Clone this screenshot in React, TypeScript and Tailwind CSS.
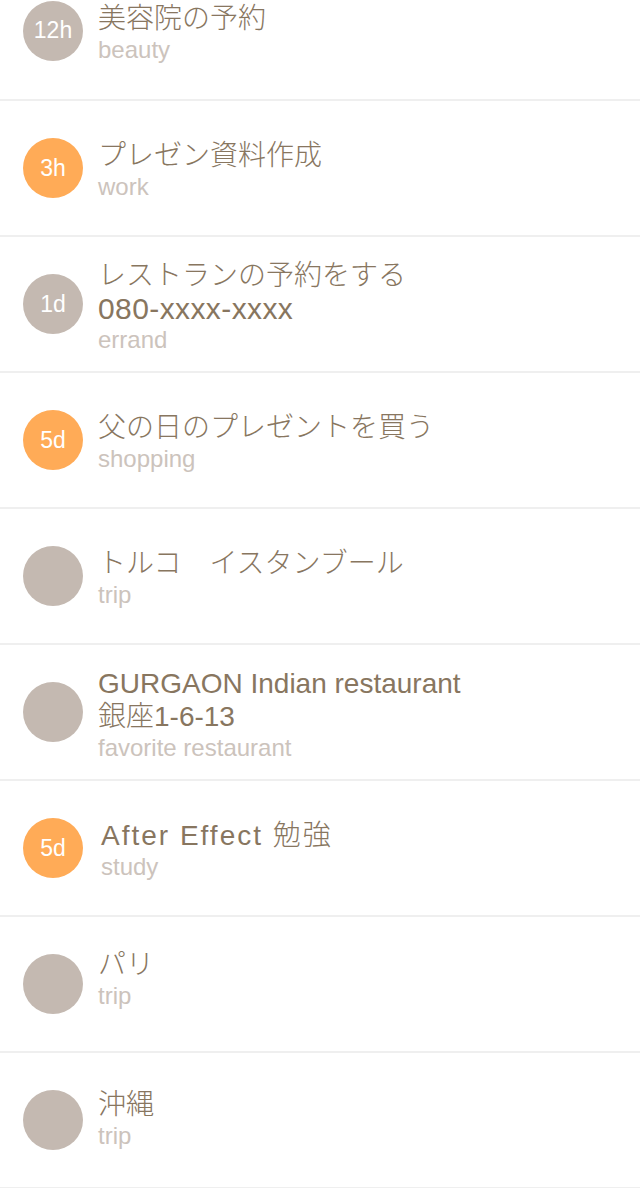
import React from "react";

type Item = {
  badge: string;
  orange: boolean;
  lines: string[];
  sub: string;
  spaced?: boolean;
  shift?: string;
};

const items: Item[] = [
  { badge: "12h", orange: false, lines: ["美容院の予約"], sub: "beauty" },
  { badge: "3h", orange: true, lines: ["プレゼン資料作成"], sub: "work" },
  { badge: "1d", orange: false, lines: ["レストランの予約をする", "080-xxxx-xxxx"], sub: "errand" },
  { badge: "5d", orange: true, lines: ["父の日のプレゼントを買う"], sub: "shopping" },
  { badge: "", orange: false, lines: ["トルコ　イスタンブール"], sub: "trip" },
  { badge: "", orange: false, lines: ["GURGAON Indian restaurant", "銀座1-6-13"], sub: "favorite restaurant" },
  { badge: "5d", orange: true, lines: ["After Effect 勉強"], sub: "study", spaced: true },
  { badge: "", orange: false, lines: ["パリ"], sub: "trip", shift: "-translate-y-[7px]" },
  { badge: "", orange: false, lines: ["沖縄"], sub: "trip", shift: "-translate-y-[3px]" },
];

const font = {
  fontFamily: '"Liberation Sans", "Noto Sans CJK JP", sans-serif',
};

export default function App() {
  return (
    <div className="w-[640px] h-[1188px] overflow-hidden bg-white" style={font}>
      <div className="-mt-[38px]">
        {items.map((it, i) => (
          <div
            key={i}
            className={`flex items-center pl-[23px] gap-[15px] border-b-2 border-[#efefef] ${
              i === 0 ? "h-[139px]" : "h-[136px]"
            }`}
          >
            <div
              className={`w-[60px] h-[60px] rounded-full flex items-center justify-center shrink-0 ${
                it.orange ? "bg-[#ffab57]" : "bg-[#c4b9b1]"
              }`}
            >
              <span className="text-white text-[23px] leading-none font-light">{it.badge}</span>
            </div>
            <div
              className={`flex flex-col pt-[5px] ${it.spaced ? "ml-[3px]" : ""} ${it.shift ?? ""}`}
            >
              {it.lines.map((l, j) => (
                <div
                  key={j}
                  className={`leading-[33px] text-[#88765f] font-light whitespace-nowrap ${
                    it.spaced ? "tracking-[2px]" : ""
                  } ${l.startsWith("080") ? "text-[30px] tracking-[0.4px]" : "text-[28px]"}`}
                >
                  {l}
                </div>
              ))}
              <div className="text-[24px] leading-[30px] text-[#ccc3bc] font-light whitespace-nowrap">
                {it.sub}
              </div>
            </div>
          </div>
        ))}
      </div>
    </div>
  );
}
